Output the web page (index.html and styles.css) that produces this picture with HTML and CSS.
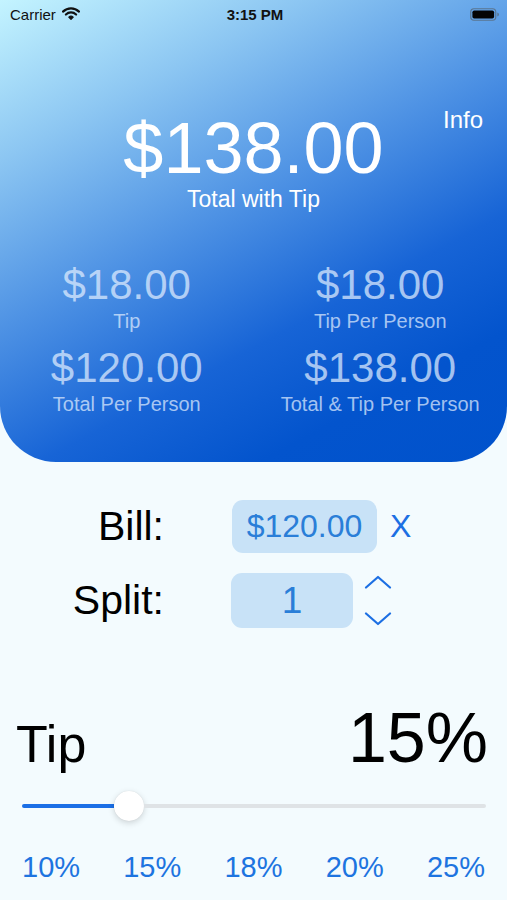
FILE: index.html
```html
<!DOCTYPE html>
<html>
<head>
<meta charset="utf-8">
<link rel="stylesheet" href="styles.css">
</head>
<body>
<div class="app">
  <header class="header">
    <div class="status">
      <div class="status-left">
        <span class="carrier">Carrier</span>
        <svg class="wifi" width="18" height="13" viewBox="0 0 18 13">
          <path d="M1 4.6 A11.5 11.5 0 0 1 17 4.6" fill="none" stroke="#111" stroke-width="2.2" stroke-linecap="round"/>
          <path d="M3.9 7.5 A7.4 7.4 0 0 1 14.1 7.5" fill="none" stroke="#111" stroke-width="2.2" stroke-linecap="round"/>
          <path d="M6.8 10.2 A3.3 3.3 0 0 1 11.2 10.2 L9 12.4 Z" fill="#111" stroke="#111" stroke-width="1.2" stroke-linejoin="round"/>
        </svg>
      </div>
      <span class="time">3:15 PM</span>
      <div class="status-right">
        <svg class="battery" width="30" height="13" viewBox="0 0 30 13">
          <rect x="0.75" y="0.75" width="25" height="11.5" rx="3.2" fill="none" stroke="#5a7590" stroke-width="1.2"/>
          <rect x="2.4" y="2.4" width="21.7" height="8.2" rx="1.8" fill="#050505"/>
          <path d="M27.3 4.4 Q29 5 29 6.5 Q29 8 27.3 8.6 Z" fill="#5a7590"/>
        </svg>
      </div>
    </div>
    <a class="info">Info</a>
    <div class="total">$138.00</div>
    <div class="total-label">Total with Tip</div>
    <div class="grid">
      <div class="cell"><div class="value">$18.00</div><div class="label">Tip</div></div>
      <div class="cell"><div class="value">$18.00</div><div class="label">Tip Per Person</div></div>
      <div class="cell"><div class="value">$120.00</div><div class="label">Total Per Person</div></div>
      <div class="cell"><div class="value">$138.00</div><div class="label">Total &amp; Tip Per Person</div></div>
    </div>
  </header>

  <section class="form">
    <div class="row bill-row">
      <span class="row-label">Bill:</span>
      <div class="field bill-field">$120.00</div>
      <span class="clear">X</span>
    </div>
    <div class="row split-row">
      <span class="row-label">Split:</span>
      <div class="field split-field">1</div>
      <div class="stepper">
        <svg width="28" height="14" viewBox="0 0 28 14"><path d="M2 12.5 L14 2 L26 12.5" fill="none" stroke="#1c6fe3" stroke-width="2.2" stroke-linecap="round" stroke-linejoin="round"/></svg>
        <svg width="28" height="14" viewBox="0 0 28 14"><path d="M2 1.5 L14 12 L26 1.5" fill="none" stroke="#1c6fe3" stroke-width="2.2" stroke-linecap="round" stroke-linejoin="round"/></svg>
      </div>
    </div>
  </section>

  <section class="tip">
    <span class="tip-label">Tip</span>
    <span class="tip-value">15%</span>
  </section>

  <div class="slider">
    <div class="track-fill"></div>
    <div class="thumb"></div>
    <div class="track-rest"></div>
  </div>

  <div class="presets">
    <span>10%</span>
    <span>15%</span>
    <span>18%</span>
    <span>20%</span>
    <span>25%</span>
  </div>
</div>
</body>
</html>
```

FILE: styles.css
```css
* { box-sizing: border-box; }
html, body {
  margin: 0;
  padding: 0;
  background: #f3fbfe;
}
body {
  font-family: "Liberation Sans", Arial, sans-serif;
  width: 507px;
  height: 900px;
  overflow: hidden;
}
.app {
  display: flex;
  flex-direction: column;
}
.header {
  position: relative;
  height: 462px;
  border-radius: 0 0 56px 56px;
  background: linear-gradient(152deg, #c4f4ff 0%, #8cc6f2 22%, #4e92e4 45%, #1764d6 66%, #0354cd 82%, #0052cc 100%);
  display: flex;
  flex-direction: column;
  color: #fff;
}
.status {
  height: 28px;
  display: flex;
  align-items: center;
  justify-content: space-between;
  padding: 0 7px 0 10px;
  color: #111;
  font-size: 15px;
}
.status-left, .status-right {
  width: 120px;
  display: flex;
  align-items: center;
}
.status-right { justify-content: flex-end; }
.carrier { margin-right: 6px; }
.wifi { margin-top: -1px; }
.time { font-weight: bold; font-size: 15px; }
.info {
  position: absolute;
  top: 108px;
  right: 24px;
  font-size: 24px;
  line-height: 24px;
  color: #fff;
}
.total {
  margin-top: 84px;
  text-align: center;
  font-size: 72px;
  line-height: 72px;
}
.total-label {
  margin-top: 4px;
  text-align: center;
  font-size: 23px;
  line-height: 23px;
}
.grid {
  margin-top: 53px;
  display: grid;
  grid-template-columns: 1fr 1fr;
  row-gap: 16px;
  color: rgba(225, 238, 255, 0.72);
}
.cell {
  display: flex;
  flex-direction: column;
  align-items: center;
}
.value {
  font-size: 42px;
  line-height: 42px;
}
.label {
  margin-top: 5px;
  font-size: 20px;
  line-height: 20px;
}
.form {
  display: flex;
  flex-direction: column;
  gap: 20px;
  margin-top: 38px;
}
.row {
  display: flex;
  align-items: center;
}
.row-label {
  width: 164px;
  text-align: right;
  font-size: 41px;
  color: #000;
}
.field {
  background: #c8e2f7;
  border-radius: 11px;
  color: #2a7ed8;
  display: flex;
  align-items: center;
  justify-content: center;
}
.bill-field {
  margin-left: 68px;
  width: 145px;
  height: 53px;
  font-size: 32px;
}
.clear {
  margin-left: 13px;
  font-size: 32px;
  color: #1c6fe3;
}
.split-field {
  margin-left: 67px;
  width: 122px;
  height: 55px;
  font-size: 37px;
}
.stepper {
  margin-left: 11px;
  height: 55px;
  display: flex;
  flex-direction: column;
  justify-content: space-between;
  padding: 2px 0;
}
.tip {
  margin-top: 75px;
  display: flex;
  justify-content: space-between;
  align-items: baseline;
  padding: 0 19px 0 16px;
  color: #000;
}
.tip-label {
  font-size: 52px;
  line-height: 70px;
}
.tip-value {
  font-size: 70px;
  line-height: 70px;
}
.slider {
  margin-top: 12px;
  height: 30px;
  display: flex;
  align-items: center;
  padding: 0 21px 0 22px;
}
.track-fill {
  flex: 0 0 92px;
  height: 4px;
  border-radius: 2px 0 0 2px;
  background: #1b6fe6;
}
.thumb {
  flex: 0 0 30px;
  height: 30px;
  border-radius: 50%;
  background: #fff;
  box-shadow: 0 2px 6px rgba(0, 0, 0, 0.16), 0 0 1px rgba(0, 0, 0, 0.12);
}
.track-rest {
  flex: 1;
  height: 4px;
  border-radius: 0 2px 2px 0;
  background: #dfe3e6;
}
.presets {
  margin-top: 32px;
  display: flex;
  justify-content: space-between;
  padding: 0 22px;
  font-size: 29px;
  line-height: 28px;
  color: #1d74e0;
}
```
